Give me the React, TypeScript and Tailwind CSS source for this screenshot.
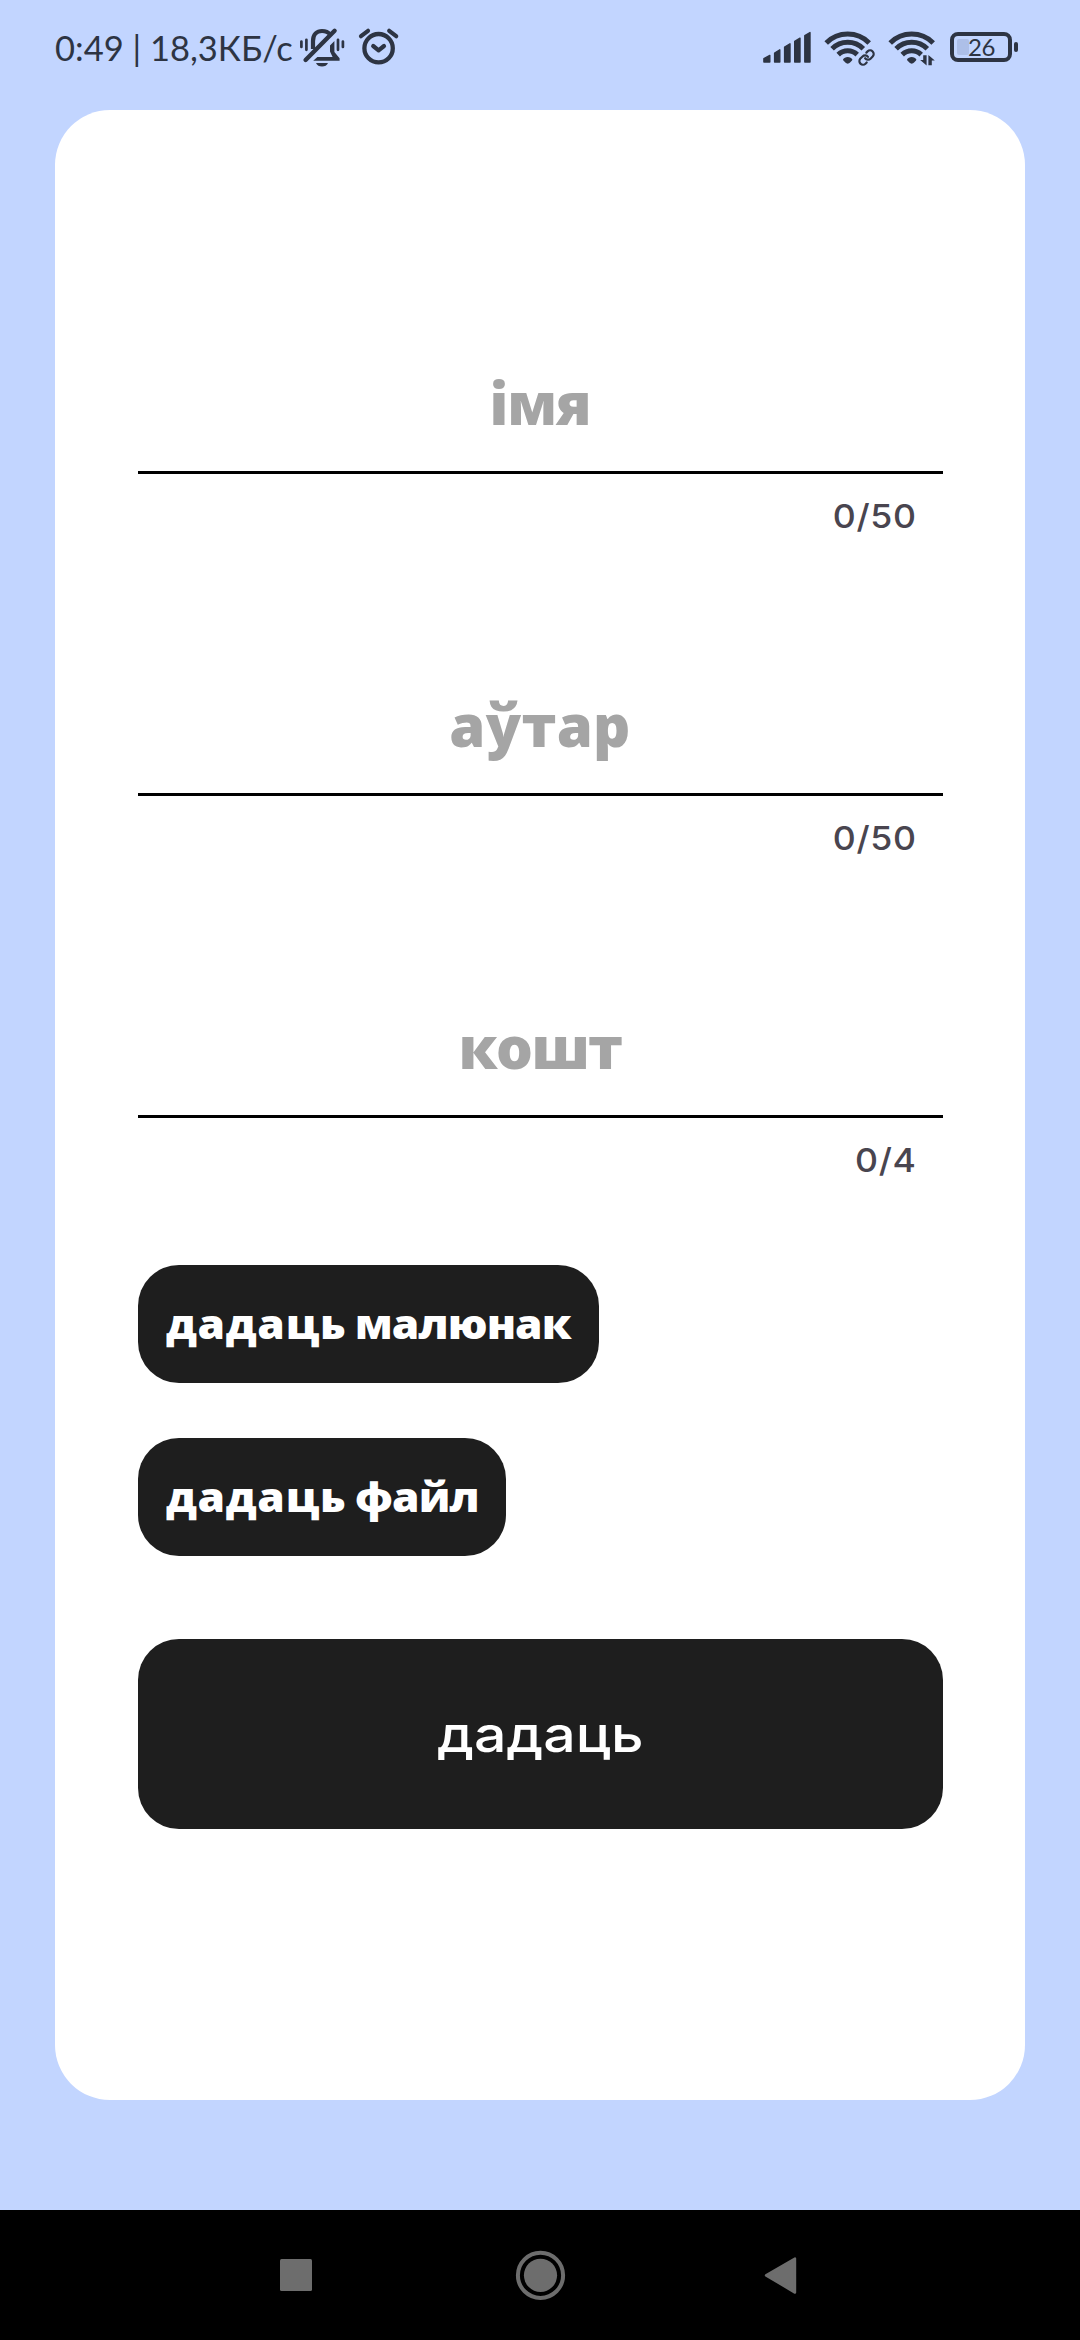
const INK = "#2d3443";

function MutedBell() {
  return (
    <svg className="h-[110px] w-[56px] shrink-0" viewBox="294 0 56 110" fill={INK} stroke="none">
      <g fill="none" stroke={INK} strokeLinecap="round">
        <path d="M313 49V41C313 34.5 317 31 322 31C325.5 31 328.5 32.4 330.2 34.6" strokeWidth="4.2" strokeLinecap="butt" />
        <path d="M334.6 30.8L305.6 60" strokeWidth="4.4" />
        <path d="M301.4 41.5v5.5M306.4 39.8v10M338 39.8v10M342.9 41.5v5.5" strokeWidth="2.7" />
      </g>
      <path d="M334.4 41V52L339.6 58.2V60.8H313.2L317.4 57H332.6L330 51.5V45.4Z" />
      <path d="M316 63H328C327 65.4 324.8 66.6 322 66.6S317 65.4 316 63Z" />
    </svg>
  );
}

function AlarmClock() {
  return (
    <svg className="h-[110px] w-[60px] shrink-0" viewBox="350 0 60 110" fill="none" stroke={INK} strokeLinecap="round" strokeLinejoin="round">
      <circle cx="378.6" cy="48.2" r="14.2" strokeWidth="4.3" />
      <path d="M361 36.2L368 30.8M389.2 30.8L396.2 36.2" strokeWidth="4.2" />
      <path d="M373.2 46L378.6 50.4L384 46" strokeWidth="4.2" />
    </svg>
  );
}

function SignalBars() {
  return (
    <svg className="h-[110px] w-[60px] shrink-0" viewBox="756 0 60 110" fill={INK} stroke={INK} strokeWidth="1.4" strokeLinejoin="round">
      <path d="M762.9 58.6L768.8 55.4V62H762.9ZM773.6 53L778.8 49.8V62H773.6ZM783.6 47L789 43.8V62H783.6ZM793.7 41.4L799 38.2V62H793.7ZM803.8 35.6L809 32.6V62H803.8Z" />
    </svg>
  );
}

function WifiArcs() {
  return (
    <>
      <g fill="none" stroke={INK} strokeWidth="5">
        <path d="M825.2 42.9A30.4 30.4 0 0 1 868.2 42.9" />
        <path d="M831.1 48.7A22 22 0 0 1 862.3 48.7" />
        <path d="M837.2 54.6A13.6 13.6 0 0 1 856.2 54.6" />
      </g>
      <path d="M842 59.6C843.4 56 850 56 851.4 59.6C851.4 60.8 848 63.8 846.7 63.8S842 60.8 842 59.6Z" fill={INK} />
    </>
  );
}

function WifiLinked() {
  return (
    <svg className="h-[110px] w-[64px] shrink-0" viewBox="816 0 64 110">
      <WifiArcs />
      <g transform="translate(856.9 48.9) scale(.72)" fill="none" stroke={INK} strokeWidth="3" strokeLinecap="round">
        <path d="M10 13a5 5 0 0 0 7.54.54l3-3a5 5 0 0 0-7.07-7.07l-1.72 1.71" />
        <path d="M14 11a5 5 0 0 0-7.54-.54l-3 3a5 5 0 0 0 7.07 7.07l1.71-1.71" />
      </g>
    </svg>
  );
}

function WifiTraffic() {
  return (
    <svg className="h-[110px] w-[64px] shrink-0" viewBox="816 0 64 110">
      <WifiArcs />
      <path d="M861.6 55.2V65.4L855.2 60H858.2V55.2ZM863.4 65.2V55L869.8 60.4H866.8V65.2Z" fill={INK} />
    </svg>
  );
}

function Battery({ level }: { level: number }) {
  return (
    <div className="mt-8 flex h-[30px] items-center">
      <div className="flex h-[30px] w-[62px] items-center rounded-[8px] border-4 border-[#2d3443] pl-[3px]">
        <div className="h-4 w-3 shrink-0 rounded-[2px] bg-[#adbfe8]" />
        <span className="-ml-px font-['Lato'] text-[24px] leading-[22px] tracking-[-0.5px] text-[#2d3443]">{level}</span>
      </div>
      <div className="ml-[2px] h-[10px] w-1 rounded-[2px] bg-[#2d3443]" />
    </div>
  );
}

function StatusBar() {
  return (
    <header className="flex h-[110px] items-start">
      <span className="ml-[55px] mt-[23px] w-[239px] whitespace-nowrap font-['Lato'] text-[34.5px] leading-[50px] text-[#2d3443]">
        0:49 | 18,3КБ/с
      </span>
      <MutedBell />
      <AlarmClock />
      <div className="ml-auto flex items-start pr-[62px]">
        <SignalBars />
        <WifiLinked />
        <WifiTraffic />
        <div className="w-[5px]" />
        <Battery level={26} />
      </div>
    </header>
  );
}

function Field({ label, count, tracking }: { label: string; count: string; tracking: string }) {
  return (
    <div className="flex flex-col">
      <div className={`h-[105px] text-center font-['Open_Sans'] text-[58px] font-extrabold leading-[105px] text-[#a5a5a5] ${tracking}`}>{label}</div>
      <div className="mt-4 h-[3.25px] bg-black" />
      <div className="mt-[21px] h-[42px] origin-right scale-x-[1.08] whitespace-nowrap pr-[24.5px] text-right font-['Inter'] text-[33px] font-[450] leading-[42px] tracking-[0.6px] text-[#49454f]">
        {count}
      </div>
    </div>
  );
}

function PickButton({ verb, object, size }: { verb: string; object: string; size: string }) {
  return (
    <button
      className={`flex h-[118px] items-center self-start whitespace-nowrap rounded-[41px] bg-[#1e1e1e] pb-0.5 pl-7 font-['Open_Sans'] text-[41.5px] font-extrabold text-white ${size}`}
    >
      <span className="inline-block origin-left scale-x-[1.065] [word-spacing:-3px]">
        <span className="tracking-[0.7px]">{verb}</span> <span className="tracking-[-0.9px]">{object}</span>
      </span>
    </button>
  );
}

function NavBar() {
  return (
    <nav className="flex h-[130px] items-center justify-center bg-black">
      <svg className="h-[130px] w-[540px]" viewBox="270 2210 540 130" fill="#6d6d6d">
        <rect x="280" y="2259" width="32" height="32" rx="1.5" />
        <circle cx="540.5" cy="2275.3" r="16.6" />
        <circle cx="540.5" cy="2275.3" r="22.6" fill="none" stroke="#6d6d6d" strokeWidth="4" />
        <path d="M766 2275.4L795 2258.5V2292.6Z" stroke="#6d6d6d" strokeWidth="2.4" strokeLinejoin="round" />
      </svg>
    </nav>
  );
}

export default function App() {
  return (
    <div className="flex h-[2340px] w-[1080px] flex-col overflow-hidden bg-[#c2d5ff]">
      <StatusBar />
      <main className="mx-[55px] flex h-[1990px] flex-col rounded-[55px] bg-white px-[82.5px] pt-[240px]">
        <div className="flex flex-col gap-[134.5px]">
          <Field label="імя" count="0/50" tracking="tracking-[-1px]" />
          <Field label="аўтар" count="0/50" tracking="tracking-[0.3px]" />
          <Field label="кошт" count="0/4" tracking="tracking-[-1.6px]" />
        </div>
        <div className="mt-[84.25px] flex flex-col gap-[55.3px]">
          <PickButton verb="дадаць" object="малюнак" size="w-[461.5px]" />
          <PickButton verb="дадаць" object="файл" size="w-[368px]" />
        </div>
        <button className="mt-[82.7px] flex h-[189.7px] items-center justify-center rounded-[41px] bg-[#1e1e1e] text-white">
          <span className="inline-block scale-x-[1.14] font-['Inter'] text-[50.2px] font-medium leading-[60px]">дадаць</span>
        </button>
      </main>
      <div className="grow" />
      <NavBar />
    </div>
  );
}
